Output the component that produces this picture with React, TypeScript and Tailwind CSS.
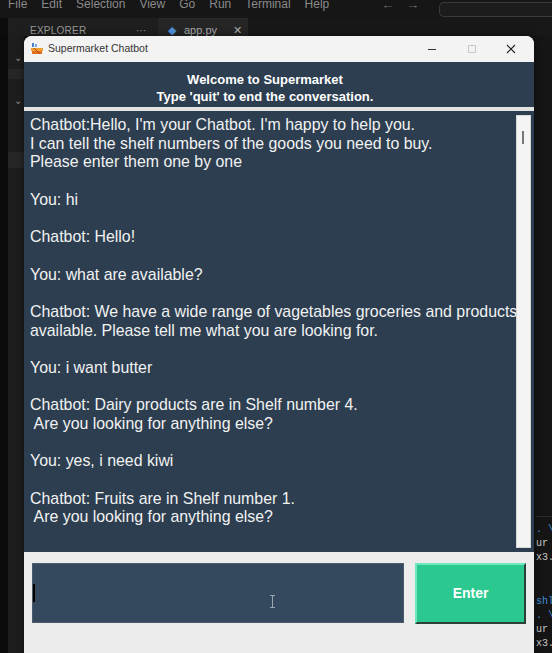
import type { ReactNode } from "react";

const chatLines: string[] = [
  "Chatbot:Hello, I'm your Chatbot. I'm happy to help you.",
  "I can tell the shelf numbers of the goods you need to buy.",
  "Please enter them one by one",
  "",
  "You: hi",
  "",
  "Chatbot: Hello!",
  "",
  "You: what are available?",
  "",
  "Chatbot: We have a wide range of vagetables groceries and products",
  "available. Please tell me what you are looking for.",
  "",
  "You: i want butter",
  "",
  "Chatbot: Dairy products are in Shelf number 4.",
  " Are you looking for anything else?",
  "",
  "You: yes, i need kiwi",
  "",
  "Chatbot: Fruits are in Shelf number 1.",
  " Are you looking for anything else?",
];

const menuItems = ["File", "Edit", "Selection", "View", "Go", "Run", "Terminal", "Help"];

function AppIcon() {
  return (
    <svg width="12" height="12" viewBox="0 0 12 12">
      <rect x="1" y="0" width="2" height="4" fill="#4a7fd0" />
      <rect x="4" y="1" width="2" height="3" fill="#7aa6e6" />
      <rect x="0" y="5" width="12" height="3" fill="#f0a030" />
      <rect x="1" y="8" width="10" height="3" fill="#e07020" />
      <path d="M3 5 L9 11" stroke="#c04010" strokeWidth="1" />
    </svg>
  );
}

function TermLine({ children, color }: { children: ReactNode; color: string }) {
  return <div className={`h-[14px] whitespace-pre leading-[14px] ${color}`}>{children}</div>;
}

export default function App() {
  return (
    <div
      className="relative h-[653px] w-[552px] overflow-hidden bg-[#141414]"
      style={{ fontFamily: '"Liberation Sans", Arial, sans-serif' }}
    >
      {/* editor chrome behind the window */}
      <div className="flex h-[18px] items-start bg-[#161616]">
        <div className="-mt-[5px] flex gap-[14px] pl-[8px] text-[12px] text-[#8a8a8a]">
          {menuItems.map((item) => (
            <span key={item}>{item}</span>
          ))}
        </div>
        <div className="-mt-[5px] ml-[52px] flex gap-[12px] text-[13px] text-[#6a6a6a]">
          <span>←</span>
          <span>→</span>
        </div>
        <div className="ml-[20px] mt-[2px] h-[15px] flex-1 rounded-l-[5px] border border-r-0 border-[#3a3a3a] bg-[#1c1c1c]" />
      </div>
      <div className="flex h-[18px] bg-[#1a1a1a]">
        <div className="w-[8px] bg-[#0c0c0c]" />
        <div className="flex w-[150px] items-end justify-between bg-[#1e1e1e] pl-[22px] pr-[12px] text-[10px] text-[#9a9a9a]">
          <span className="-mb-[2px] tracking-wide">EXPLORER</span>
          <span className="-mb-[2px]">···</span>
        </div>
        <div className="flex w-[90px] items-end gap-[8px] border-t border-[#2a2a2a] bg-[#252525] pl-[10px] text-[11px] text-[#aaaaaa]">
          <span className="-mb-[2px] text-[#4d8fd6]">◆</span>
          <span className="-mb-[2px]">app.py</span>
          <span className="-mb-[2px] ml-auto pr-[6px]">✕</span>
        </div>
        <div className="flex-1 bg-[#181818]" />
      </div>
      <div className="flex h-[617px]">
        <div className="flex w-[24px]">
          <div className="w-[8px] bg-[#0a0a0a]" />
          <div className="flex flex-1 flex-col bg-[#1d1d1d] pt-[14px] text-[10px] text-[#8a8a8a]">
            <span className="pl-[6px]">⌄</span>
            <div className="mt-[4px] h-[10px] bg-[#262626]" />
            <span className="mt-[14px] pl-[6px]">⌄</span>
            <div className="mt-[44px] h-[16px] bg-[#262626]" />
          </div>
        </div>
        <div className="flex-1" />
        <div className="flex w-[18px] flex-col bg-[#151515] pl-[2px] pt-[480px] text-[10px]" style={{ fontFamily: '"Liberation Mono", monospace' }}>
          <div className="mb-[6px] h-px bg-[#2a2a2a]" />
          <TermLine color="text-[#3c8fd8]">. \o</TermLine>
          <TermLine color="text-[#c8c8c8]">ur g</TermLine>
          <TermLine color="text-[#c8c8c8]">x3.</TermLine>
          <div className="h-[30px]" />
          <TermLine color="text-[#3c8fd8]">shl</TermLine>
          <TermLine color="text-[#3c8fd8]">. \o</TermLine>
          <TermLine color="text-[#c8c8c8]">ur g</TermLine>
          <TermLine color="text-[#c8c8c8]">x3.</TermLine>
        </div>
      </div>

      {/* chatbot window */}
      <div className="absolute left-[24px] top-[36px] flex h-[640px] w-[510px] flex-col overflow-hidden rounded-t-[8px] bg-[#ececec] shadow-[0_0_6px_rgba(0,0,0,0.5)]">
        <div className="flex h-[26px] shrink-0 items-center bg-[#f3f3f3] pl-[7px]">
          <AppIcon />
          <span className="ml-[5px] text-[10.5px] text-[#333]">Supermarket Chatbot</span>
          <div className="ml-auto flex items-center">
            <div className="flex w-[40px] justify-center">
              <div className="h-px w-[8px] bg-[#333]" />
            </div>
            <div className="flex w-[40px] justify-center">
              <div className="h-[8px] w-[8px] rounded-[1px] border border-[#c4c4c4]" />
            </div>
            <div className="flex w-[42px] justify-center pr-[4px]">
              <svg width="10" height="10" viewBox="0 0 10 10">
                <path d="M1 1 L9 9 M9 1 L1 9" stroke="#222" strokeWidth="1.1" />
              </svg>
            </div>
          </div>
        </div>

        <div className="flex h-[45px] shrink-0 flex-col items-center justify-center bg-[#2c3e50] pr-[28px] pt-[6px] text-[13px] font-bold leading-[17px] text-white">
          <span>Welcome to Supermarket</span>
          <span>Type 'quit' to end the conversation.</span>
        </div>
        <div className="h-[4px] shrink-0 bg-[#e4e4e4]" />

        <div className="flex h-[441px] shrink-0 bg-[#2c3e50]">
          <div className="flex-1 overflow-hidden pl-[6px] pt-[5px] text-[15.9px] leading-[18.7px] text-[#f2f2f2]">
            {chatLines.map((line, i) => (
              <div key={i} className="h-[18.7px] whitespace-pre">
                {line}
              </div>
            ))}
          </div>
          <div className="my-[4px] mr-[3px] w-[15px] border border-[#d8d8d8] bg-[#f4f4f4] pt-[15px]">
            <div className="ml-[5px] h-[13px] w-[2px] bg-[#777]" />
          </div>
        </div>

        <div className="flex gap-[11px] px-[8px] pt-[11px]">
          <div className="relative flex h-[60px] w-[373px] items-center border border-[#4a5b6c] bg-[#34495e]">
            <div className="h-[18px] w-[2px] bg-black" />
            <svg className="absolute left-[236px] top-[31px]" width="7" height="13" viewBox="0 0 7 13">
              <path d="M1 0.5 H6 M3.5 0.5 V12.5 M1 12.5 H6" stroke="#9aa6b2" strokeWidth="1" fill="none" />
            </svg>
          </div>
          <div className="flex h-[61px] w-[111px] items-center justify-center border-2 border-b-[#2a4038] border-l-[#6fe8bf] border-r-[#2a4038] border-t-[#6fe8bf] bg-[#2bc990] text-[14px] font-bold text-white">
            Enter
          </div>
        </div>
      </div>
    </div>
  );
}
